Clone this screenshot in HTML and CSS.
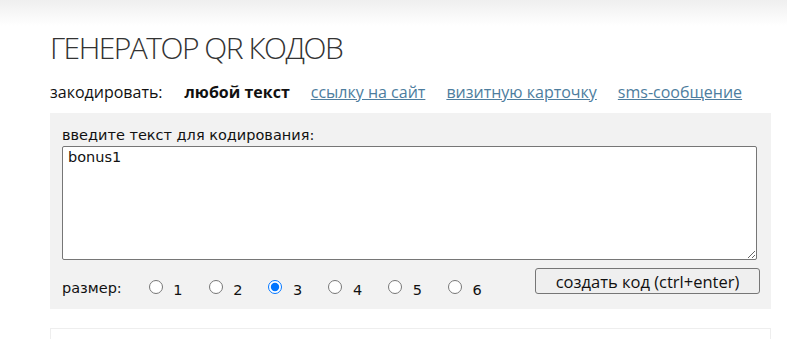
FILE: index.html
```html
<!DOCTYPE html>
<html lang="ru">
<head>
  <meta charset="UTF-8" />
  <title>Генератор QR кодов</title>
  <link rel="stylesheet" href="styles.css">
</head>
<body>
  <div class="top-shade"></div>
  <div class="page">
    <h1>ГЕНЕРАТОР QR КОДОВ</h1>

    <div class="modes">
      <span class="modes-label">закодировать:</span>
      <b class="current">любой текст</b>
      <a href="#">ссылку на сайт</a>
      <a href="#">визитную карточку</a>
      <a href="#">sms-сообщение</a>
    </div>

    <div class="panel">
      <label class="field-label" for="qrtext">введите текст для кодирования:</label>
      <textarea id="qrtext" class="qr-text">bonus1</textarea>

      <div class="controls">
        <span class="size-label">размер:</span>
        <label class="size"><input type="radio" name="size" value="1"> 1</label>
        <label class="size"><input type="radio" name="size" value="2"> 2</label>
        <label class="size"><input type="radio" name="size" value="3" checked> 3</label>
        <label class="size"><input type="radio" name="size" value="4"> 4</label>
        <label class="size"><input type="radio" name="size" value="5"> 5</label>
        <label class="size"><input type="radio" name="size" value="6"> 6</label>
        <button class="make-btn">создать код (ctrl+enter)</button>
      </div>
    </div>

    <div class="ad">
      <span class="ad-title">РЕКЛАМА · 0+</span>
    </div>
  </div>
</body>
</html>
```

FILE: styles.css
```css
body {
  margin: 0;
  background: #fff;
  font-family: "DejaVu Sans", Verdana, sans-serif;
  color: #111;
}

.top-shade {
  height: 26px;
  background: linear-gradient(to bottom, #efefef, #fff);
}

.page {
  width: 721px;
  margin-left: 50px;
}

h1 {
  margin: 4px 0 0;
  font-family: "Open Sans", sans-serif;
  font-weight: 300;
  font-size: 30px;
  line-height: 36px;
  color: #333;
  letter-spacing: -1.5px;
}

.modes {
  margin-top: 16px;
  display: flex;
  align-items: baseline;
  font-family: "Open Sans", sans-serif;
  font-size: 16px;
  line-height: 20px;
}

.modes-label {
  margin-right: 22px;
}

.current {
  font-weight: bold;
  margin-right: 21px;
}

.modes a {
  color: #4d7d9e;
  margin-right: 21px;
}

.panel {
  margin-top: 11px;
  background: #f2f2f2;
  padding: 12px 14px 10px 12px;
}

.field-label {
  display: block;
  font-size: 14.5px;
  line-height: 20px;
  color: #111;
}

.qr-text {
  display: block;
  box-sizing: border-box;
  width: 695px;
  height: 114px;
  margin: 1px 0 0;
  padding: 2px 5px;
  border: 1px solid #767676;
  border-radius: 2px;
  font-family: "DejaVu Sans", Verdana, sans-serif;
  font-size: 14.5px;
  color: #111;
  resize: vertical;
}

.controls {
  display: flex;
  align-items: flex-start;
  margin-top: 8px;
  font-size: 14.5px;
  line-height: 17px;
}

.size-label,
.size {
  flex-shrink: 0;
  white-space: nowrap;
  padding-top: 12px;
}

.size-label {
  margin-right: 27px;
}

.size {
  margin-right: 26px;
}

.size input {
  margin: 0 6px 0 0;
  width: 14px;
  height: 14px;
  vertical-align: 1px;
}

.make-btn {
  flex-shrink: 0;
  margin-left: auto;
  margin-right: -3px;
  width: 225px;
  height: 26px;
  background: #efefef;
  border: 1px solid #767676;
  border-radius: 3px;
  font-family: "Open Sans", sans-serif;
  font-size: 16.5px;
  color: #111;
}

.ad {
  margin-top: 19px;
  border: 1px solid #eee;
  height: 40px;
  padding: 5px 10px;
}

.ad-title {
  font-size: 9px;
  line-height: 12px;
  letter-spacing: 1.5px;
  color: #999;
}
```
